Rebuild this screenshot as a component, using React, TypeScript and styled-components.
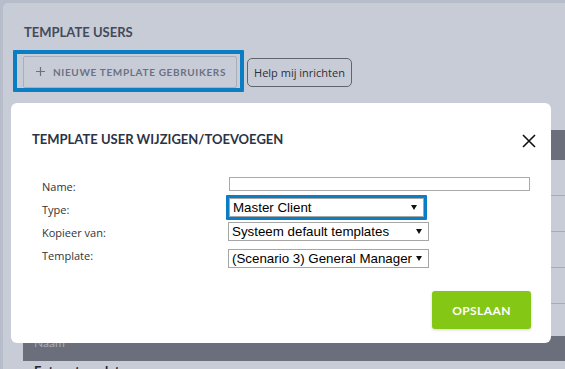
import React from 'react'
import styled, { createGlobalStyle } from 'styled-components'

const GlobalStyle = createGlobalStyle`
	html, body {
		margin: 0;
		padding: 0;
		background: #b7bdcb;
	}
	* {
		box-sizing: border-box;
	}
`

const Page = styled.div`
	position: relative;
	height: 369px;
	padding: 3px 0 0 3px;
	overflow: hidden;
	font-family: 'Open Sans', 'Liberation Sans', sans-serif;
`

const Card = styled.div`
	height: 100%;
	background: #c8ccd7;
	border-top-left-radius: 5px;
	padding: 21px 0 0 10px;
`

const PageTitle = styled.h2`
	margin: 0 0 10px 11px;
	font-family: Lato, 'Open Sans', sans-serif;
	font-weight: 700;
	font-size: 13px;
	line-height: 16px;
	color: #444a5b;
`

const Toolbar = styled.div`
	display: flex;
	align-items: flex-start;
`

const Highlight = styled.div`
	border: ${p => p.$width || 3}px solid #0b7ec3;
	padding: ${p => p.$pad || '0'};
	border-radius: 1px;
`

const GhostButton = styled.button`
	display: flex;
	align-items: center;
	gap: 8px;
	width: 214px;
	height: 32px;
	padding: 0 0 0 12px;
	background: transparent;
	border: 1px solid #a9aebc;
	border-radius: 2px;
	font-family: Lato, 'Open Sans', sans-serif;
	font-weight: 700;
	font-size: 10px;
	letter-spacing: 0.65px;
	color: #6b7184;

	& svg {
		width: 9px;
		height: 9px;
		margin-top: -1px;
	}
`

const HelpButton = styled.button`
	margin: 8px 0 0 3px;
	width: 105px;
	height: 29px;
	padding: 0;
	background: transparent;
	border: 1px solid #60646e;
	border-radius: 5px;
	font-family: 'Open Sans', 'Liberation Sans', sans-serif;
	font-size: 11px;
	color: #2b2f38;
`

const Table = styled.div`
	margin: 38px 0 0 10px;
`

const HeadBar = styled.div`
	height: ${p => p.$height}px;
	background: #6b6f7b;
	padding-left: 11px;
	font-family: Lato, 'Open Sans', sans-serif;
	font-size: 12px;
	line-height: 13px;
	color: #a7abb7;
`

const Row = styled.div`
	height: 36px;
	border-bottom: 1px solid #a6abb7;
`

const Gap = styled.div`
	height: 32px;
`

const CellText = styled.div`
	padding: 2px 0 0 11px;
	font-family: Lato, 'Open Sans', sans-serif;
	font-weight: 700;
	font-size: 13px;
	line-height: 16px;
	color: #22252d;
`

const Modal = styled.div`
	position: absolute;
	left: 11px;
	top: 103px;
	width: 540px;
	height: 240px;
	display: flex;
	flex-direction: column;
	padding: 28px 15px 14px 21px;
	background: #ffffff;
	border-radius: 6px;
`

const ModalHeader = styled.div`
	display: flex;
	align-items: center;
	justify-content: space-between;
	height: 16px;
`

const ModalTitle = styled.h3`
	margin: 0;
	font-family: Lato, 'Open Sans', sans-serif;
	font-weight: 700;
	font-size: 13px;
	line-height: 16px;
	color: #2c3345;
`

const CloseButton = styled.button`
	display: flex;
	width: 14px;
	height: 14px;
	padding: 0;
	margin-top: 3px;
	background: none;
	border: none;
`

const Form = styled.div`
	margin-top: 28px;
	padding-left: 10px;
`

const FormRow = styled.div`
	display: grid;
	grid-template-columns: 187px auto;
	height: 23px;
	align-items: start;
`

const Label = styled.label`
	font-family: 'Open Sans', 'Liberation Sans', sans-serif;
	font-size: 11px;
	line-height: 23px;
	color: #333333;
`

const Control = styled.div`
	margin-top: ${p => p.$top}px;
	margin-left: ${p => p.$left || 0}px;
	justify-self: start;
`

const TextInput = styled.div`
	width: 301px;
	height: 14px;
	border: 1px solid #a9a9a9;
	background: #ffffff;
`

const Select = styled.div`
	position: relative;
	width: ${p => p.$width}px;
	height: 19px;
	padding: 0 24px 0 3px;
	border: 1px solid #a6a6a6;
	background: #ffffff;
	font-family: 'Liberation Sans', Arial, sans-serif;
	font-size: 13.33px;
	line-height: 17px;
	color: #000000;
	white-space: nowrap;
	overflow: hidden;

	&::after {
		content: '';
		position: absolute;
		right: 6px;
		top: 6px;
		border-left: 3px solid transparent;
		border-right: 3px solid transparent;
		border-top: 5px solid #111111;
	}
`

const Footer = styled.div`
	margin-top: auto;
	display: flex;
	justify-content: flex-end;
	padding-right: 5px;
`

const SaveButton = styled.button`
	width: 99px;
	height: 38px;
	background: #85c715;
	border: none;
	border-radius: 3px;
	box-shadow: 0 1px 3px rgba(0, 0, 0, 0.18);
	font-family: Lato, 'Open Sans', sans-serif;
	font-weight: 700;
	font-size: 12px;
	letter-spacing: 0.4px;
	color: #ffffff;
`

const fields = [
	{ label: 'Name:', top: 2 },
	{ label: 'Type:', top: -3, value: 'Master Client', focus: true },
	{ label: 'Kopieer van:', top: 1, value: 'Systeem default templates' },
	{ label: 'Template:', top: 5, value: '(Scenario 3) General Manager' },
]

export default function App() {
	return (
		<>
			<GlobalStyle />
			<Page>
				<Card>
					<PageTitle>TEMPLATE USERS</PageTitle>
					<Toolbar>
						<Highlight $width={4} $pad="2px 3px 0 6px">
							<GhostButton>
								<svg viewBox="0 0 9 9">
									<path d="M4.5 0v9M0 4.5h9" stroke="#6b7184" strokeWidth="1.2" />
								</svg>
								NIEUWE TEMPLATE GEBRUIKERS
							</GhostButton>
						</Highlight>
						<HelpButton>Help mij inrichten</HelpButton>
					</Toolbar>

					<Table>
						<HeadBar $height={30} />
						<Row />
						<Row />
						<Row />
						<Row />
						<Gap />
						<HeadBar $height={25}>Naam</HeadBar>
						<CellText>Entree template</CellText>
					</Table>
				</Card>

				<Modal>
					<ModalHeader>
						<ModalTitle>TEMPLATE USER WIJZIGEN/TOEVOEGEN</ModalTitle>
						<CloseButton>
							<svg viewBox="0 0 14 14" width="14" height="14">
								<path d="M1 1l12 12M13 1L1 13" stroke="#111" strokeWidth="1.6" />
							</svg>
						</CloseButton>
					</ModalHeader>

					<Form>
						{fields.map(f => (
							<FormRow key={f.label}>
								<Label>{f.label}</Label>
								{!f.value && (
									<Control $top={f.top}>
										<TextInput />
									</Control>
								)}
								{f.value && f.focus && (
									<Control $top={f.top} $left={-3}>
										<Highlight>
											<Select $width={195}>{f.value}</Select>
										</Highlight>
									</Control>
								)}
								{f.value && !f.focus && (
									<Control $top={f.top} $left={-1}>
										<Select $width={201}>{f.value}</Select>
									</Control>
								)}
							</FormRow>
						))}
					</Form>

					<Footer>
						<SaveButton>OPSLAAN</SaveButton>
					</Footer>
				</Modal>
			</Page>
		</>
	)
}
